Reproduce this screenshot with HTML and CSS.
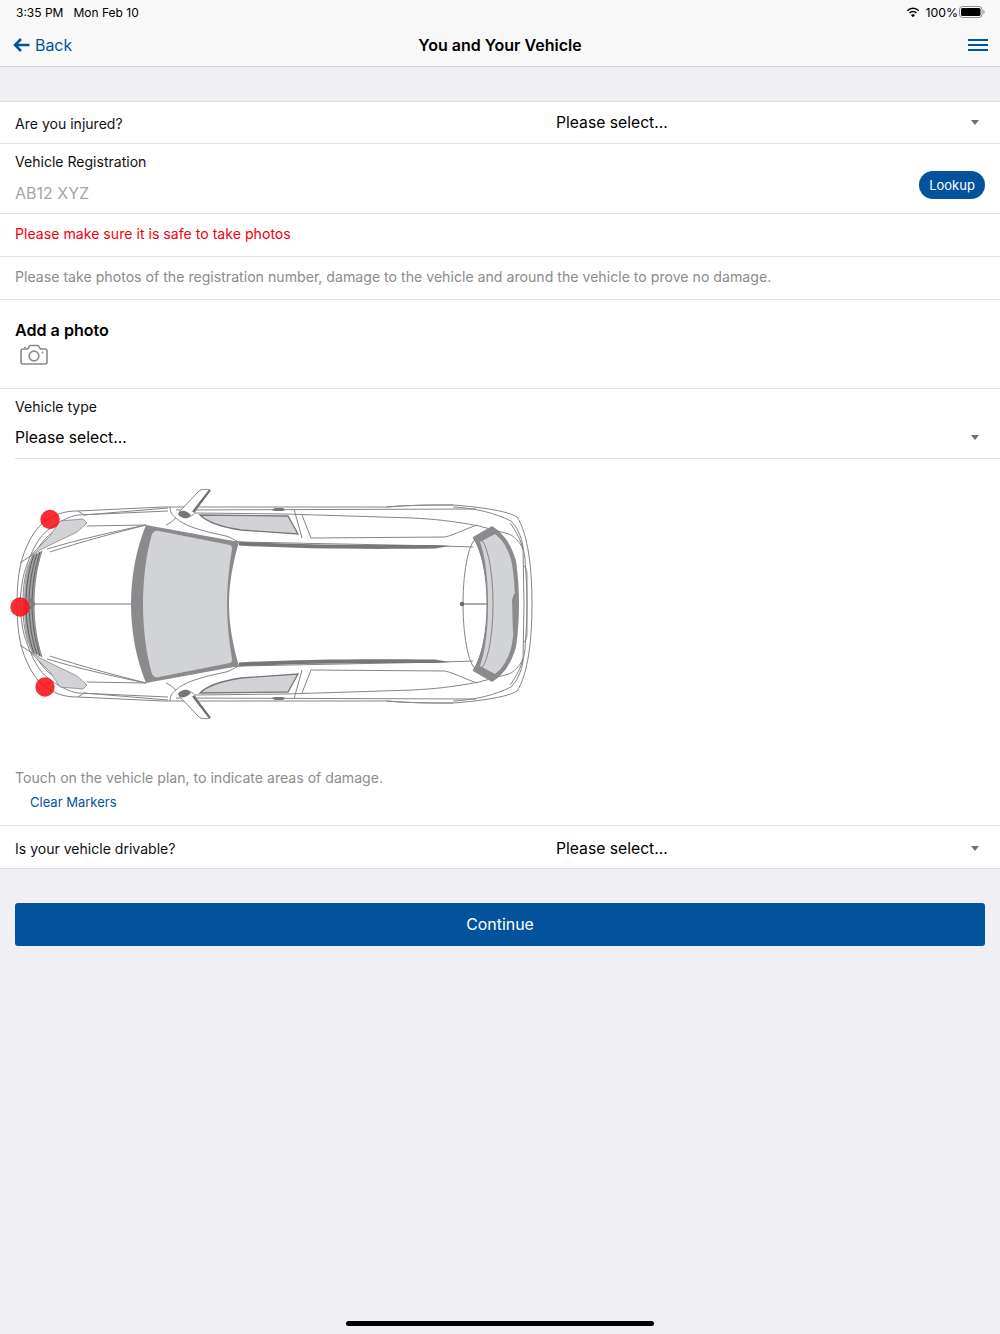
FILE: index.html
```html
<!DOCTYPE html>
<html lang="en">
<head>
<meta charset="utf-8">
<title>You and Your Vehicle</title>
<link rel="stylesheet" href="styles.css">
</head>
<body>
<div class="screen">
  <header class="top">
    <div class="status">
      <div class="status-left"><span>3:35 PM</span><span>Mon Feb 10</span></div>
      <div class="status-right">
        <svg class="wifi" viewBox="0 0 16 12" width="14" height="11"><path d="M8 2.100c2.300 0 4.400.9 6 2.400l1.100-1.200A10.300 10.300 0 0 0 8 .4 10.300 10.300 0 0 0 .9 3.300L2 4.500a8.700 8.700 0 0 1 6-2.400zM8 5.700c1.300 0 2.500.5 3.400 1.300l1.100-1.200A6.800 6.800 0 0 0 8 4a6.800 6.800 0 0 0-4.500 1.800L4.600 7A5.100 5.100 0 0 1 8 5.700zM8 8c-.9 0-1.700.3-2.300.9L8 11.500l2.300-2.600C9.700 8.300 8.900 8 8 8z" fill="#000"/></svg>
        <span class="pct">100%</span>
        <svg class="battery" viewBox="0 0 26 12" width="26" height="12"><rect x=".5" y=".5" width="22.500" height="11" rx="3" fill="none" stroke="#8e8e8e"/><rect x="2" y="2" width="19.500" height="8" rx="1.500" fill="#000"/><path d="M24.300 4v4c.8-.3 1.300-1 1.300-2s-.5-1.700-1.300-2z" fill="#8e8e8e"/></svg>
      </div>
    </div>
    <nav class="nav">
      <a class="back">
        <svg viewBox="0 0 17 14" width="17" height="14"><path d="M16.500 7H2.500M8 1 2 7l6 6" fill="none" stroke="#03539c" stroke-width="2.500"/></svg>
        <span>Back</span>
      </a>
      <h1 class="title">You and Your Vehicle</h1>
      <div class="menu"><i></i><i></i><i></i></div>
    </nav>
  </header>

  <main class="sheet">
    <div class="row select-row">
      <span class="label">Are you injured?</span>
      <div class="select"><span>Please select...</span><i class="caret"></i></div>
    </div>
    <div class="row reg-row">
      <div class="reg-fields">
        <span class="label">Vehicle Registration</span>
        <span class="placeholder">AB12 XYZ</span>
      </div>
      <button class="lookup">Lookup</button>
    </div>
    <div class="row note-row warn">Please make sure it is safe to take photos</div>
    <div class="row note-row muted">Please take photos of the registration number, damage to the vehicle and around the vehicle to prove no damage.</div>
    <div class="row photo-row">
      <h2 class="photo-title">Add a photo</h2>
      <svg class="camera" viewBox="0 0 28 21" width="28" height="21"><path d="M3 5h4.500l2.200-3.200c.2-.2.4-.3.7-.3h7.200c.3 0 .5.100.7.3L20.500 5H25a2 2 0 0 1 2 2v11a2 2 0 0 1-2 2H3a2 2 0 0 1-2-2V7a2 2 0 0 1 2-2z" fill="none" stroke="#8a8a8e" stroke-width="1.600"/><circle cx="14" cy="12" r="4.800" fill="none" stroke="#8a8a8e" stroke-width="1.700"/><circle cx="22.500" cy="8.500" r=".9" fill="#8a8a8e"/><path d="M4 3.500h2" stroke="#8a8a8e" stroke-width="1.200"/></svg>
    </div>
    <div class="type-block">
      <span class="label">Vehicle type</span>
      <div class="select"><span>Please select...</span><i class="caret"></i></div>
    </div>

    <div class="plan">
      <svg class="car" viewBox="0 480 550 250" width="550" height="250">
        <defs>
          <g id="half-lines" fill="none" stroke="#858585" stroke-width="1">
            <path d="M17 604c0-20 2-42 10-58 6-14 14-24 27-30 8-4 16-5 24-5L163 507H387C410 505 430 505 453 505C480 507 508 511 517 517C526 530 532 560 532 604"/>
            <path d="M20 604c1-14 2-28 8-42 5-14 12-26 20-32 10-8 22-14 30-15l90-4"/>
            <path d="M23 604c0-14 1-26 5-38 5-12 14-26 25-34"/>
            <path d="M20 563l12-8M78 511l6 4 84-7"/>
            <path d="M47 549c30-9 65-17 99-24M50 552c30-10 65-19 96-27"/>
            <path d="M87 526l59-1"/>
            <path d="M170 507c0 5 2 8 6 11 8 8 26 13 50 18 4 1 8 4 13 6"/>
            <path d="M166 525c5-2 7-5 10-7"/>
            <path d="M176 510l300-1"/>
            <path d="M195 513l90 1 128 4c20 1 40 3 66 8l30 8c8 4 12 10 14 16"/>
            <path d="M302 515l9 23 134-1c12-3 24-10 33-12"/>
            <path d="M294 509l8 29M170 535l68 7M239 542l204 4 30 1"/>
            <path d="M387 507c20-2 45-2 66-2M453 507c22 1 42 6 58 14 6 6 10 14 12 26l1 57"/>
            <path d="M510 523c5 6 14 22 15 36 1 15 2 30 2 45"/>
            <path d="M523 565c3 2 4 6 4 10v29"/>
          </g>
          <g id="half-fill">
            <path d="M30 556l20-20 10-15 23-2 4 4-10 9-33 16z" fill="#d2d3d6" stroke="#858585" stroke-width=".8"/>
            <path d="M24 604c0-20 2-36 8-49l10-4c-5 16-8 34-8 53z" fill="#a2a2a4"/>
            <path d="M26 604c0-18 3-36 8-49M29 604c0-18 3-36 8-50M32 604c0-18 3-36 8-52" fill="none" stroke="#5c5c5c" stroke-width="1"/>
            <path d="M200 515l88 1 10 18-57-4c-20-3-34-8-41-15z" fill="#d2d3d6" stroke="#777" stroke-width="1.300"/>
            <path d="M180 511l19-20c2-2 8-2 11-1l-14 20c-2 6-6 7-10 7-5-1-7-3-6-6z" fill="#fff" stroke="#858585" stroke-width="1"/>
            <path d="M178 514c1-3 4-4 7-3 3 1 5 3 6 4l-3 3c-3 1-9-1-10-4z" fill="#777"/>
            <path d="M210 490l-17 22" stroke="#707070" stroke-width="2.200" fill="none"/>
            <path d="M239 541.500c50 3 120 4 196 3.500l15 1-15 2.500c-76 1-146 0-196-3z" fill="#777"/>
            <path d="M271 510l4-2h8l2 2-2 1h-8z" fill="#777"/>
            <path d="M473 537l19-11c10 6 19 17 24 35 2 14 3 28 3 43h-32c0-24-4-50-14-67z" fill="#8b8b8d"/>
            <path d="M480 542l15-8c8 6 14 16 17 30 2 12 3 26 3 40h-27c0-22-2-46-8-62z" fill="#d2d3d6"/>
            <path d="M473 538c8 10 14 36 14 66" fill="none" stroke="#858585" stroke-width="1"/>
          </g>
        </defs>
        <rect x="0" y="480" width="550" height="250" fill="#fff"/>
        <use href="#half-lines"/>
        <g transform="matrix(1 0 0 -1 0 1208)"><use href="#half-lines"/></g>
        <use href="#half-fill"/>
        <g transform="matrix(1 0 0 -1 0 1208)"><use href="#half-fill"/></g>

        <path d="M146 525l93 17c-6 20-10 42-10 62s4 42 10 62l-93 17c-10-24-15-52-15-79s5-55 15-79z" fill="#8b8b8d"/>
        <path d="M159 531l71 14c2 1 2 2 2 4-3 18-5 36-5 55s2 37 5 55c0 2 0 3-2 4l-71 14c-3 1-5 0-7-3-6-20-9-46-9-70s3-50 9-70c2-3 4-4 7-3z" fill="#d2d3d6"/>
        <path d="M36 604h95" stroke="#7d7d7d" stroke-width="1.200"/>
        <path d="M42 551c-5 15-8 33-8 53s3 38 8 53" fill="none" stroke="#858585" stroke-width="1"/>
        <path d="M27 595l9 9-9 9 4-9z" fill="#7d7d7d"/>

        <ellipse cx="478" cy="604" rx="15" ry="66" fill="none" stroke="#858585" stroke-width="1"/>
        <path d="M463 604h25" stroke="#7d7d7d" stroke-width="1.300"/>
        <circle cx="462" cy="604" r="2.200" fill="#666"/>
        <path d="M512 600l2-6h2v32l-3 8z" fill="#8b8b8d"/>

        <circle class="marker" cx="50" cy="519.500" r="9.700"/>
        <circle class="marker" cx="20" cy="607" r="9.700"/>
        <circle class="marker" cx="45" cy="687" r="9.700"/>
      </svg>
    </div>

    <div class="hint">
      <p class="hint-text">Touch on the vehicle plan, to indicate areas of damage.</p>
      <a class="clear">Clear Markers</a>
    </div>
    <div class="row select-row last">
      <span class="label">Is your vehicle drivable?</span>
      <div class="select"><span>Please select...</span><i class="caret"></i></div>
    </div>
  </main>

  <div class="actions"><button class="continue">Continue</button></div>
  <div class="home"></div>
</div>
</body>
</html>
```
FILE: styles.css
```css
* { box-sizing: border-box; }
html, body { margin: 0; padding: 0; }
body { font-family: Inter, "Liberation Sans", sans-serif; color: #000; background: #efeff4; }
.screen { position: relative; width: 1000px; height: 1334px; overflow: hidden; background: #efeff4; }

.top { height: 67px; background: #f8f8f8; border-bottom: 1px solid #d8d8dc; }
.status { height: 24px; padding: 0 15px 0 16px; display: flex; justify-content: space-between; align-items: center; font-size: 12px; }
.status-left { display: flex; gap: 10px; }
.status-right { display: flex; align-items: center; gap: 5px; }
.pct { font-size: 12.300px; margin-right: -4px; }
.nav { height: 42px; padding: 0 12px 0 13px; display: flex; align-items: center; justify-content: space-between; position: relative; }
.back { display: flex; align-items: center; gap: 5px; font-size: 15.900px; color: #03539c; }
.title { position: absolute; left: 0; right: 0; margin: 0; text-align: center; font-size: 16px; font-weight: 600; }
.menu { display: flex; flex-direction: column; gap: 3px; width: 20px; }
.menu i { display: block; height: 2px; background: #03539c; }

.sheet { margin-top: 34px; background: #fff; border-top: 1px solid #dedee2; border-bottom: 1px solid #dedee2; }
.row { border-bottom: 1px solid #e2e2e4; padding: 0 15px; }
.row.last { border-bottom: 0; }
.label { font-size: 14.060px; color: #111; }

.select-row { height: 42px; display: grid; grid-template-columns: 541px 1fr; align-items: center; }
.select-row .label { padding-top: 2px; }
.select { display: flex; align-items: center; justify-content: space-between; font-size: 15.700px; padding-right: 6px; }
.last .select { padding-top: 2px; }
.caret { width: 0; height: 0; border-left: 4px solid transparent; border-right: 4px solid transparent; border-top: 5px solid #707070; }

.reg-row { height: 70px; display: flex; align-items: center; justify-content: space-between; }
.reg-fields { display: flex; flex-direction: column; gap: 13px; padding-bottom: 2px; }
.placeholder { font-size: 16px; color: #a5a5a8; }
.lookup { width: 66px; height: 28px; border: 0; border-radius: 14px; background: #03539c; color: #fff; font: 13px Inter, "Liberation Sans", sans-serif; padding: 0; margin-top: 13px; }

.note-row { height: 43px; display: flex; align-items: center; font-size: 14.140px; padding-bottom: 4px; }
.warn { color: #f5000f; }
.muted { color: #8c8c8e; }

.photo-row { height: 89px; padding-top: 20px; }
.photo-title { margin: 0; font-size: 16.100px; font-weight: 600; line-height: 20px; }
.camera { display: block; margin: 4px 0 0 5px; }

.type-block { margin-left: 15px; height: 70px; padding-top: 9px; border-bottom: 1px solid #e2e2e4; display: flex; flex-direction: column; gap: 13px; }
.type-block .select { padding-right: 21px; }

.plan { height: 300px; padding-top: 21px; }
.car { display: block; }
.marker { fill: #fb0f17; fill-opacity: .88; }

.hint { height: 67px; padding: 10px 15px 0; border-bottom: 1px solid #e2e2e4; }
.hint-text { margin: 0; font-size: 14.100px; line-height: 18px; color: #8c8c8e; }
.clear { display: block; margin: 7px 0 0 15px; font-size: 13px; line-height: 16px; color: #03539c; }

.actions { padding: 34px 15px 0; }
.continue { display: block; width: 100%; height: 43px; border: 0; border-radius: 3px; background: #03539c; color: #fff; font: 15.900px Inter, "Liberation Sans", sans-serif; }

.home { position: absolute; left: 346px; bottom: 8px; width: 308px; height: 5px; border-radius: 3px; background: #000; }
```
